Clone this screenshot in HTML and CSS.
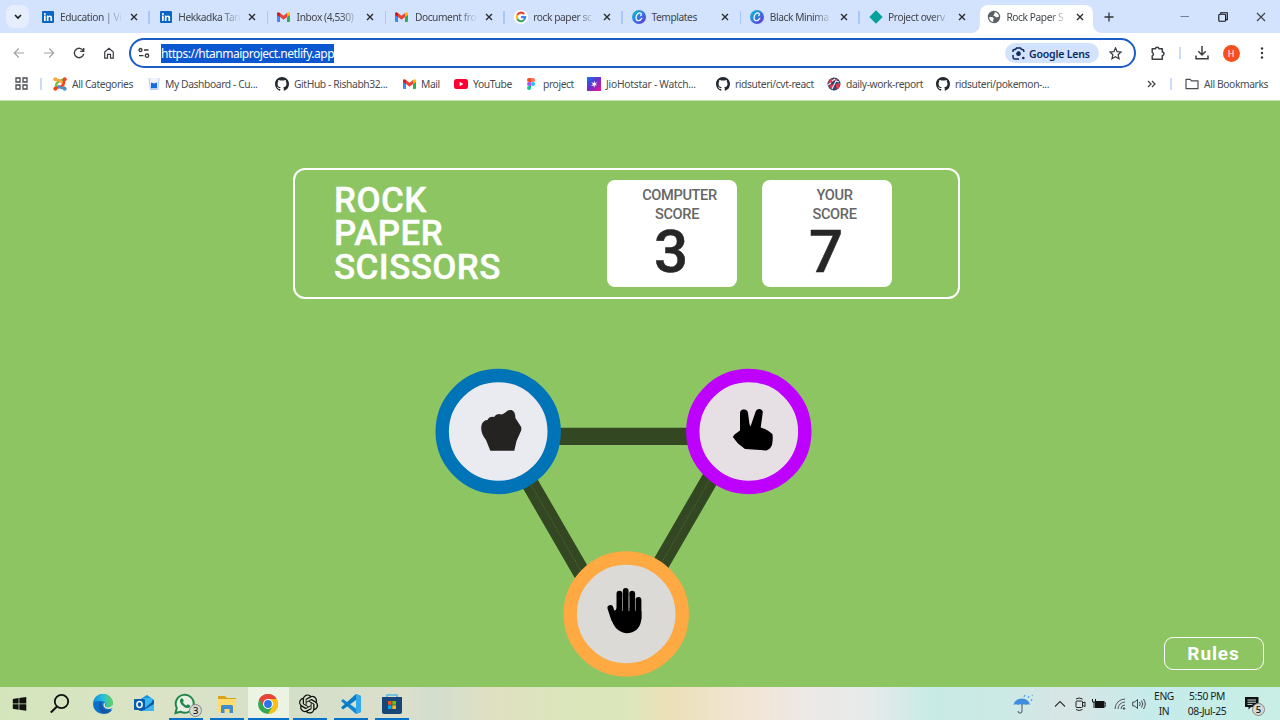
FILE: index.html
```html
<!DOCTYPE html>
<html lang="en">
<head>
<meta charset="utf-8">
<title>Rock Paper Scissors</title>
<link rel="stylesheet" href="styles.css">
</head>
<body>
<svg class="defs" width="0" height="0">
  <defs>
    <symbol id="linkedin" viewBox="0 0 12 12"><rect width="12" height="12" rx="1" fill="#0a66c2"/><path d="M2 4.6h1.7V10H2zM4.8 4.6h1.6v.8c.9-1.4 3.7-1.3 3.7 1.3V10H8.4V7c0-1.4-1.9-1.3-1.9 0v3H4.8z" fill="#fff"/><circle cx="2.9" cy="2.9" r="1" fill="#fff"/></symbol>
    <symbol id="gmail" viewBox="0 0 13 10"><path d="M0 1.5V9q0 1 1 1h2V4z" fill="#4285f4"/><path d="M13 1.5V9q0 1-1 1h-2V4z" fill="#34a853"/><path d="M10 1v4l3-2V1.6C13 .1 11.500-.5 10 1z" fill="#fbbc04"/><path d="M3 1v4L0 3V1.600C0 .1 1.500-.5 3 1z" fill="#c5221f"/><path d="M3 1l3.500 2.700L10 1v4L6.500 7.700 3 5z" fill="#ea4335"/></symbol>
    <symbol id="google" viewBox="0 0 14 14"><circle cx="7" cy="7" r="7" fill="#fff"/><g fill="none" stroke-width="2.100"><path d="M10.200 4A4.200 4.200 0 0 0 3.300 5" stroke="#ea4335"/><path d="M3.300 5a4.200 4.200 0 0 0 0 4" stroke="#fbbc04"/><path d="M3.300 9a4.200 4.200 0 0 0 6.400 1.300" stroke="#34a853"/><path d="M9.700 10.300A4.200 4.200 0 0 0 11.200 7.100H7" stroke="#4285f4"/></g></symbol>
    <linearGradient id="canvaFill" x1="0" y1="0" x2="1" y2="1"><stop offset="0" stop-color="#08c5d0"/><stop offset=".5" stop-color="#3479df"/><stop offset="1" stop-color="#7928dd"/></linearGradient>
    <symbol id="canva" viewBox="0 0 14 14"><circle cx="7" cy="7" r="7" fill="url(#canvaFill)"/><path d="M8.700 5.600c2-2.200-.8-3.500-2.900-1.900C3.400 5.700 3.400 10.300 6 10.700c1.600.2 3-.9 3.800-2.400" fill="none" stroke="#fff" stroke-width="1.200" stroke-linecap="round"/></symbol>
    <symbol id="github" viewBox="0 0 16 16"><path fill="#24292f" d="M8 0C3.580 0 0 3.580 0 8c0 3.540 2.290 6.530 5.470 7.590.4.070.55-.17.55-.38 0-.19-.01-.82-.01-1.490-2.010.37-2.530-.49-2.690-.94-.09-.23-.48-.94-.82-1.130-.28-.15-.68-.52-.01-.53.63-.01 1.080.58 1.230.82.72 1.210 1.870.87 2.330.66.070-.52.280-.87.510-1.070-1.780-.2-3.640-.89-3.640-3.950 0-.87.310-1.590.82-2.150-.08-.2-.36-1.020.08-2.120 0 0 .67-.21 2.200.82.640-.18 1.320-.27 2-.27s1.360.09 2 .27c1.530-1.040 2.200-.82 2.200-.82.440 1.100.160 1.920.080 2.120.510.560.820 1.270.820 2.150 0 3.070-1.870 3.750-3.650 3.950.290.250.540.730.540 1.480 0 1.070-.01 1.930-.01 2.200 0 .21.150.46.550.38A8.010 8.010 0 0 0 16 8c0-4.420-3.580-8-8-8z"/></symbol>
    <symbol id="close" viewBox="0 0 8 8"><path d="M1 1l6 6M7 1L1 7" stroke="#292c30" stroke-width="1.400"/></symbol>
  </defs>
</svg>

<header class="browser">
  <div class="tabstrip">
    <div class="tab-search"><svg width="10" height="7" viewBox="0 0 10 7"><path d="M2 2l3 3 3-3" fill="none" stroke="#1c1e22" stroke-width="1.700"/></svg></div>
    <div class="tab"><svg class="fav small"><use href="#linkedin"/></svg><span class="tab-title fade">Education | Vi</span><svg class="x"><use href="#close"/></svg></div>
    <div class="tab"><svg class="fav small"><use href="#linkedin"/></svg><span class="tab-title fade">Hekkadka Tan</span><svg class="x"><use href="#close"/></svg></div>
    <div class="tab"><svg class="fav mail"><use href="#gmail"/></svg><span class="tab-title fade">Inbox (4,530)</span><svg class="x"><use href="#close"/></svg></div>
    <div class="tab"><svg class="fav mail"><use href="#gmail"/></svg><span class="tab-title fade">Document fro</span><svg class="x"><use href="#close"/></svg></div>
    <div class="tab"><svg class="fav"><use href="#google"/></svg><span class="tab-title fade">rock paper sc</span><svg class="x"><use href="#close"/></svg></div>
    <div class="tab"><svg class="fav"><use href="#canva"/></svg><span class="tab-title">Templates</span><svg class="x"><use href="#close"/></svg></div>
    <div class="tab"><svg class="fav"><use href="#canva"/></svg><span class="tab-title fade">Black Minima</span><svg class="x"><use href="#close"/></svg></div>
    <div class="tab last"><svg class="fav" viewBox="0 0 14 14"><path d="M7 .3L13.700 7 7 13.700.3 7z" fill="#05a19b"/></svg><span class="tab-title fade">Project overv</span><svg class="x"><use href="#close"/></svg></div>
    <div class="tab active"><svg class="fav" viewBox="0 0 14 14"><circle cx="7" cy="7" r="6.200" fill="#5b6065"/><path d="M7.500 2.200c2.500 0 4.300 2 4.500 4.200L9.700 7.600 7.800 6.300 6.200 5.600l1.300-1.700zM2.100 7l3.300.1 1.600 1.600-.8 1.300v2C3.700 11.700 2.200 9.600 2.100 7z" fill="#fff"/></svg><span class="tab-title fade">Rock Paper S</span><svg class="x"><use href="#close"/></svg></div>
    <svg class="newtab" viewBox="0 0 10 10"><path d="M5 .5v9M.5 5h9" stroke="#30343a" stroke-width="1.300"/></svg>
    <div class="winctl">
      <svg width="10" height="10"><path d="M.5 4.500h8.500" stroke="#777f8d"/></svg>
      <svg width="10" height="10" fill="none" stroke="#111" stroke-width="1.100"><rect x=".8" y="2.200" width="6.800" height="7" rx="1"/><path d="M2.800 2V.8h6.500v6.800H8"/></svg>
      <svg width="10" height="10"><path d="M1 1l8 8M9 1L1 9" stroke="#3c4048" stroke-width="1.100"/></svg>
    </div>
  </div>

  <div class="toolbar">
    <div class="nav">
      <svg viewBox="0 0 12 12" stroke="#a2a4a7"><path d="M11 6H1.500M5.800 1.500L1.300 6l4.500 4.500"/></svg>
      <svg viewBox="0 0 12 12" stroke="#a2a4a7"><path d="M1 6h9.500M6.200 1.500L10.700 6l-4.500 4.500"/></svg>
      <svg viewBox="0 0 12 12" stroke="#3b3e42"><path d="M10.300 4A4.700 4.700 0 1 0 10.700 6.800M10.700.9v3.500H7.200" stroke-width="1.400"/></svg>
      <svg viewBox="0 0 12 12" stroke="#3b3e42"><path d="M1.700 5L6 1.300 10.300 5v6.200H7.500V7.300h-3v3.900H1.700z" stroke-width="1.200"/></svg>
    </div>
    <div class="omnibox">
      <svg class="tune" viewBox="0 0 12 12" fill="none" stroke="#33363b" stroke-width="1.300"><circle cx="2.500" cy="3" r="1.500"/><path d="M6 3h4.500M1 8.700h4.500"/><circle cx="9" cy="8.700" r="1.700"/></svg>
      <span class="url">https://htanmaiproject.netlify.app</span>
      <span class="lens"><svg width="13" height="13" viewBox="0 0 13 13" fill="none" stroke="#0a2a63" stroke-width="1.500"><path d="M1 5V3.600Q1 2.400 2.200 2.400H3.500L4.500 1h4l1 1.400h1q1.300 0 1.300 1.300V5M1 8v2.300Q1 12 2.700 12H7"/><circle cx="6.500" cy="6.700" r="1.600" fill="#0a2a63"/><circle cx="11.300" cy="11" r=".6"/></svg><b>Google Lens</b></span>
      <svg class="star" viewBox="0 0 12 12"><path d="M6 .9l1.500 3.400 3.700.3-2.800 2.500.8 3.700L6 8.900l-3.200 1.900.8-3.700L.8 4.600l3.700-.3z" fill="none" stroke="#3b3e42" stroke-width="1.200"/></svg>
    </div>
    <div class="actions">
      <svg width="16" height="15" viewBox="0 0 16 15"><path d="M2.200 2.700h3.300a1.700 1.500 0 0 1 3.400 0h3.400v3.300a1.700 1.700 0 0 1 0 3.400v3.800H2.200V10a2 2 0 0 0 0-3.600z" fill="none" stroke="#3b3e42" stroke-width="1.500" stroke-linejoin="round"/></svg>
      <i class="rule"></i>
      <svg width="14" height="14" viewBox="0 0 14 14"><path d="M7 0v8.500M3.300 5.300L7 9l3.700-3.700M1 9.500v3.300h12V9.500" fill="none" stroke="#3b3e42" stroke-width="1.500"/></svg>
      <span class="avatar">H</span>
      <svg width="4" height="14" viewBox="0 0 4 14" fill="#33363b"><circle cx="2" cy="2.500" r="1.200"/><circle cx="2" cy="7" r="1.200"/><circle cx="2" cy="11.500" r="1.200"/></svg>
    </div>
  </div>

  <div class="bookmarks">
    <svg class="apps" viewBox="0 0 13 13" fill="none" stroke="#4a4d52" stroke-width="1.300"><path d="M1 1h4v4H1zM8 1h4v4H8zM1 8h4v4H1zM8 8h4v4H8z"/></svg>
    <i class="rule"></i>
    <div class="bm"><svg viewBox="0 0 14 14" fill="none" stroke-width="2.500"><path d="M3 11V8.500Q3 6.500 5 5L9.500 2.800H11" stroke="#7ac143"/><path d="M3 3H5.500Q8 3.500 9.500 6L11 11" stroke="#f9a541"/><path d="M11 3V6Q10.500 8 8 9.500L3 11" stroke="#f44321"/><path d="M11 11H8.500Q6 10.500 4.800 8.500" stroke="#5091cd"/><g stroke="none"><circle cx="2.300" cy="2.300" r="2" fill="#f9a541"/><circle cx="11.700" cy="2.300" r="2" fill="#f44321"/><circle cx="2.300" cy="11.700" r="2" fill="#f44321"/><circle cx="11.700" cy="11.700" r="2" fill="#5091cd"/></g></svg><span>All Categories</span></div>
    <div class="bm dash"><svg viewBox="0 0 14 14"><path d="M2 1l1.500 11.500h7.500L12 1" fill="#eef2fc" stroke="#b7c9ed"/><path d="M4 5.500l3 .9 3-.9v5.800H4z" fill="#1668e8"/></svg><span>My Dashboard - Cu...</span></div>
    <div class="bm"><svg><use href="#github"/></svg><span>GitHub - Rishabh32...</span></div>
    <div class="bm"><svg class="mail"><use href="#gmail"/></svg><span>Mail</span></div>
    <div class="bm"><svg viewBox="0 0 14 14"><rect y="2" width="14" height="10" rx="2.500" fill="#f03"/><path d="M5.600 4.800L9.400 7 5.600 9.200z" fill="#fff"/></svg><span>YouTube</span></div>
    <div class="bm"><svg viewBox="0 0 14 14"><path d="M7 1H5a2 2 0 0 0 0 4h2z" fill="#f24e1e"/><path d="M7 1h2a2 2 0 0 1 0 4H7z" fill="#ff7262"/><path d="M7 5H5a2 2 0 0 0 0 4h2z" fill="#a259ff"/><circle cx="9" cy="7" r="2" fill="#1abcfe"/><path d="M7 9H5a2 2 0 1 0 2 2z" fill="#0acf83"/></svg><span>project</span></div>
    <div class="bm wide"><svg viewBox="0 0 14 14"><defs><linearGradient id="jio" x1="0" y1="0" x2="1" y2="1"><stop stop-color="#087cf0"/><stop offset=".45" stop-color="#6330d0"/><stop offset="1" stop-color="#f0148c"/></linearGradient></defs><rect width="14" height="14" fill="url(#jio)"/><path d="M7.500 3.500l.4 2.500 2.600-.7-2 1.700 1.700 1.300-2.400-.1-.6 2.500-.7-2.300-2.600.5 2.100-1.600-1.700-2 2.400.8z" fill="#fff"/></svg><span>JioHotstar - Watch...</span></div>
    <div class="bm"><svg><use href="#github"/></svg><span>ridsuteri/cvt-react</span></div>
    <div class="bm"><svg viewBox="0 0 14 14"><circle cx="7" cy="7" r="6.500" fill="#28466b"/><path d="M1 5l4-4 1 3-3 4zM7 2l4 0-3 3zM2 9l4-2 1 3-3 2zM9 7l4-1-1 5-3 1z" fill="#e53952"/><path d="M5 4l3-2M7 8l2-4 3 1M5 12l2-4M1 8l3-2" stroke="#eef2f8" stroke-width="1.100" fill="none"/></svg><span>daily-work-report</span></div>
    <div class="bm"><svg><use href="#github"/></svg><span>ridsuteri/pokemon-...</span></div>
    <svg class="more" viewBox="0 0 9 8"><path d="M1 1l3 3-3 3M5 1l3 3-3 3" fill="none" stroke="#3b3e42" stroke-width="1.200"/></svg>
    <i class="rule"></i>
    <div class="bm all"><svg viewBox="0 0 14 14"><path d="M1 2.300h4.200l1.400 1.500H13v7.900H1z" fill="none" stroke="#4a4d52" stroke-width="1.200" stroke-linejoin="round"/></svg><span>All Bookmarks</span></div>
  </div>
</header>

<main class="game">
  <section class="scoreboard">
    <h1>ROCK<br>PAPER<br>SCISSORS</h1>
    <div class="score computer"><h2><span>COMPUTER</span><span>SCORE</span></h2><p>3</p></div>
    <div class="score"><h2><span>YOUR</span><span>SCORE</span></h2><p>7</p></div>
  </section>
  <svg class="board" width="380" height="312" viewBox="434 367 380 312">
    <g stroke="#334722" stroke-width="17.200"><path d="M500 436.300H750M515 457.500L596 597.500M723 456.500L646 589.500"/></g>
    <path d="M531 485l50 86M709.300 480.600L661.500 563" stroke="#5d7d42" stroke-width=".5" stroke-dasharray="2 1"/>
    <circle cx="498.200" cy="431.500" r="56" fill="#e9ebf1" stroke="#0074b6" stroke-width="13.400"/>
    <circle cx="748.800" cy="431.500" r="56" fill="#e6e0e4" stroke="#bd00ff" stroke-width="13.400"/>
    <circle cx="626.200" cy="614" r="56" fill="#dbdad7" stroke="#ffa943" stroke-width="13.400"/>
    <path fill="#252322" d="M490.300 450.700L486 440Q480.500 433 481.300 426.500Q482 420.500 487.500 420Q489.500 416 494 417Q497 412.500 501.500 414.500Q504 413.500 506 412Q508 409.500 511.500 410Q515.300 411 515.400 418L521.200 427Q521.800 430 520.500 432L516.500 441L514.300 450.700z"/>
    <path fill="#000" d="M740 430.500V413.500Q740 409.800 743.300 409.500Q747.500 409 748 413L749.500 424L750.500 426.500L755.500 412Q756.500 408.700 760 409Q763.500 410 762.700 413L760.700 427.500L765 429L768.500 431L772.400 434Q773.300 438 772 445Q770.500 449 766.500 450.500L745 449L738 443.500L732.800 437L734.500 434.500z"/>
    <g stroke="#000" stroke-width="5.800" stroke-linecap="round"><path d="M619.400 593.600V614M625.700 591V614M632.200 593.600V614M638.500 600V618M610.400 608L614 619"/></g>
    <path d="M611.500 611q5 .5 5.500-4V611h24.400v8Q640 632.800 626 633.200Q613 631 611 616z"/>
    <path d="M622.500 596v12M629 596v12M635.400 600v9" stroke="#8b8b89" stroke-width=".7"/>
  </svg>
  <button class="rules">Rules</button>
</main>

<footer class="taskbar">
  <div class="apps-row">
    <div class="app"><svg viewBox="0 0 24 24"><path d="M4.800 6.900l5.800-.9v5.500H4.800zM11.300 5.900l7-1v6.600h-7zM4.800 12.200h5.800v5.500l-5.800-.9zM11.300 12.200h7v6.600l-7-1z" fill="#111"/></svg></div>
    <div class="app"><svg viewBox="0 0 24 24"><circle cx="12.500" cy="9.500" r="6.700" fill="none" stroke="#111" stroke-width="1.800"/><path d="M8 14.500L1.800 20.500" stroke="#111" stroke-width="2"/></svg></div>
    <div class="app"><svg viewBox="0 0 24 24"><defs><linearGradient id="edgeTop" x1="0" x2="1"><stop stop-color="#0a92d8"/><stop offset=".5" stop-color="#29bedc"/><stop offset="1" stop-color="#63d550"/></linearGradient></defs><circle cx="12" cy="12" r="10" fill="#0b70c9"/><path d="M2.200 11C3 5 7 2 12 2c6 0 10 4.500 10 9.500 0 4-5 5.500-8 3.500 2-3-.5-6-4-6-4 0-6 0-7.800 2z" fill="url(#edgeTop)"/><path d="M10 9.500c-4.500 4-1.500 11.500 4 12.300 3 0 6-1.800 7.300-4.300-4 2.500-11.800.5-11.300-8z" fill="#1756a5"/><path d="M13 10.800c-1.700 3 .5 6.500 5 6.200 2 0 3-.8 4.500-2l-.5 3.500 2-5-2-1c-2 3.500-7.300 3.600-8 1.600-.3-.8.400-1.600 0-2.600z" fill="#d9e6c8"/></svg></div>
    <div class="app"><svg viewBox="0 0 24 24"><path d="M7 8l8-5 7 5v11H7z" fill="#1492df"/><path d="M11 6h9v7l-7 4z" fill="#38b9ef"/><path d="M22 8v11H8l5-3z" fill="#075da9"/><path d="M22 12v7H10z" fill="#41b4ed"/><rect x="2" y="7" width="11" height="11" rx="1" fill="#075cac"/><ellipse cx="7.500" cy="12.500" rx="2.600" ry="3" fill="none" stroke="#fff" stroke-width="1.500"/></svg></div>
    <div class="app open"><svg viewBox="0 0 24 24"><path d="M2.500 21l1.300-5A9 9 0 1 1 7.500 19.700z" fill="#e8f1e3" stroke="#23864e" stroke-width="2"/><path d="M8.200 6.500q1.300-.8 2 .9l.6 1.600-1 1.300q1.200 2.300 3.500 3.300l1.400-1.300 2.500 1.200q.1 2-2 2.500c-3 .7-8.500-4-8.200-7.300 0-1 .5-1.700 1.200-2.200z" fill="#23864e"/></svg><span class="badge">3</span></div>
    <div class="app open"><svg viewBox="0 0 24 24"><path d="M3 4h7l2 2h9v13H3z" fill="#dba117"/><path d="M3 7h18v13H3z" fill="#ffdc70"/><path d="M6 21v-6.500Q6 13 7.500 13h9q1.500 0 1.500 1.500V21h-3.500v-4h-5v4z" fill="#3f8dcc"/></svg></div>
    <div class="app open active"><svg viewBox="0 0 24 24"><circle cx="12" cy="12" r="10" fill="#34a853"/><path d="M12 12L3.340 7A10 10 0 0 1 20.660 7z" fill="#ea4335"/><path d="M12 7h8.660A10 10 0 0 1 12 22l4.500-7.500z" fill="#fbc116"/><path d="M3.340 7L7.670 14.500 12 12 12 7z" fill="#ea4335"/><circle cx="12" cy="12" r="5" fill="#fff"/><circle cx="12" cy="12" r="3.900" fill="#2b73e8"/></svg></div>
    <div class="app open"><svg viewBox="0 0 24 24"><path fill="#111" d="M22.280 9.820a5.980 5.980 0 0 0-.52-4.910 6.050 6.050 0 0 0-6.510-2.900A6.070 6.070 0 0 0 4.980 4.180a5.980 5.980 0 0 0-4 2.900 6.050 6.050 0 0 0 .74 7.100 5.980 5.980 0 0 0 .51 4.910 6.050 6.050 0 0 0 6.510 2.900A5.980 5.980 0 0 0 13.260 24a6.060 6.060 0 0 0 5.770-4.210 5.990 5.990 0 0 0 4-2.900 6.060 6.060 0 0 0-.75-7.070zm-9.020 12.610a4.480 4.480 0 0 1-2.880-1.040l.14-.08 4.780-2.760a.8.8 0 0 0 .39-.68v-6.740l2.020 1.170.04.050v5.580a4.500 4.500 0 0 1-4.490 4.500zM3.600 18.300a4.470 4.470 0 0 1-.53-3.010l.14.090 4.780 2.760a.77.77 0 0 0 .78 0l5.840-3.370v2.330l-.03.060-4.840 2.790A4.500 4.500 0 0 1 3.600 18.300zM2.340 7.900a4.480 4.480 0 0 1 2.370-1.980v5.680a.77.77 0 0 0 .39.680l5.810 3.350-2.020 1.170-.07 0-4.830-2.790A4.500 4.500 0 0 1 2.340 7.870zm16.600 3.850l-5.840-3.390 2.020-1.160.07 0 4.830 2.790a4.490 4.490 0 0 1-.68 8.100v-5.670a.79.79 0 0 0-.4-.67zm2.010-3.020l-.14-.090-4.770-2.780a.78.78 0 0 0-.79 0L9.410 9.230V6.900l.03-.06 4.830-2.790a4.500 4.500 0 0 1 6.680 4.660zM8.310 12.860l-2.020-1.160-.04-.060V6.070a4.500 4.500 0 0 1 7.380-3.450l-.14.080-4.780 2.760a.8.8 0 0 0-.39.680zm1.100-2.370l2.600-1.500 2.610 1.500v3l-2.600 1.500-2.610-1.500z" transform="translate(2 2.400) scale(.8)"/></svg></div>
    <div class="app open"><svg viewBox="0 0 24 24"><path d="M17 2l5 2v16l-5 2L2 9l2-2 13 9.500z" fill="#1187d4"/><path d="M17 2v6L4 17.500l-2-2z" fill="#087bc5"/><path d="M17 2l5 2v16l-5 2z" fill="#32a9ef"/></svg></div>
    <div class="app open"><svg viewBox="0 0 24 24"><path d="M7 6V3h10v3" fill="none" stroke="#55b9ea" stroke-width="1.600"/><path d="M2 5h20v15q0 2-2 2H4q-2 0-2-2z" fill="#174677"/><path d="M8 9h3.700v3.700H8z" fill="#f25022"/><path d="M12.300 9H16v3.700h-3.700z" fill="#7fba00"/><path d="M8 13.300h3.700V17H8z" fill="#00a4ef"/><path d="M12.300 13.300H16V17h-3.700z" fill="#ffb900"/></svg></div>
  </div>
  <div class="tray">
    <svg class="weather" viewBox="0 0 20 20"><path d="M.5 11Q2 4.500 9 4.500q7 .5 8 6.500-2-1.500-4 0-2-1.500-4 0-2-1.500-4 0-2-1.500-4.500 0z" fill="#3e8ddd"/><path d="M9 10v7q-.5 2.500-2.500 2-1.500-.5-1.300-2" fill="none" stroke="#667986" stroke-width="1.300"/><path d="M11 3l1-2M15 4l1-2M18 7l1-2M19 2l.6-1" stroke="#5aa7ea" stroke-width="1.300"/></svg>
    <svg class="chev" viewBox="0 0 12 8"><path d="M1 6.500l5-5 5 5" fill="none" stroke="#333" stroke-width="1.100"/></svg>
    <svg class="meet" viewBox="0 0 12 14" fill="none" stroke="#222"><rect x="2" y="4" width="6.500" height="6.500" rx="1"/><path d="M8.500 6l2.500-1v4.500L8.500 8.500M2 2q3-2 6.500 0M2 12.500q3 2 6.500 0"/></svg>
    <svg class="batt" viewBox="0 0 14 10"><path d="M3 2h9.500v7H3z" fill="#111"/><path d="M12.500 4H14v3h-1.500M.5 0v3h3V0M2 3v6" fill="none" stroke="#111"/></svg>
    <svg class="wifi" viewBox="0 0 12 12" fill="none" stroke="#555"><path d="M1 11A10 10 0 0 1 11 1M4 11a7 7 0 0 1 7-7M7 11a4 4 0 0 1 4-4"/><circle cx="10" cy="10.500" r=".8" fill="#222"/></svg>
    <svg class="vol" viewBox="0 0 14 12" fill="none" stroke="#444"><path d="M.7 4h2L5.500 1.500v9L2.700 8h-2zM7.500 4q1.500 2 0 4M9.500 2.500q2.500 3.500 0 7M11.500 1q3.500 5 0 10"/></svg>
    <div class="stack lang"><span>ENG</span><span>IN</span></div>
    <div class="stack clock"><span>5:50 PM</span><span>08-Jul-25</span></div>
    <div class="note"><svg width="14" height="14" viewBox="0 0 14 14"><path d="M0 0h13.500v10H6L3.500 12.500V10H0z" fill="#111"/><path d="M2.500 3h8.500M2.500 5.200h8.500M2.500 7.400h5" stroke="#c9dedc"/></svg><span class="badge">5</span></div>
  </div>
</footer>
</body>
</html>
```

FILE: styles.css
```css
* { box-sizing: border-box; }
body { margin: 0; width: 1280px; height: 720px; overflow: hidden; display: flex; flex-direction: column; font-family: "Noto Sans", "Open Sans", sans-serif; }
svg { display: block; flex: none; }
.defs { position: absolute; }

/* Browser chrome */
.browser { height: 101px; flex: none; background: #fff; border-bottom: 1px solid #c5e0b2; }
.tabstrip { height: 33px; background: #d3e2fd; display: flex; align-items: center; padding-left: 6px; }
.tab-search { width: 23px; height: 23px; border-radius: 8px; background: #e6eefe; display: grid; place-items: center; margin-right: 2.500px; }
.tab { width: 118.300px; height: 28px; padding: 0 12px 0 9px; display: flex; align-items: center; position: relative; flex: none; }
.tab:not(.last):not(.active)::after { content: ""; position: absolute; right: 0; top: 8px; width: 1.500px; height: 13px; background: #a8c7fa; }
.fav { width: 14px; height: 14px; margin-right: 5.500px; }
.fav.small { width: 12px; height: 12px; margin: 0 6.500px 0 1px; }
.fav.mail { width: 13px; height: 10px; margin: 0 6.500px 0 0; }
.tab-title { width: 62px; font-size: 10.200px; letter-spacing: -.42px; white-space: nowrap; color: #41454b; margin-right: auto; }
.tab-title.fade { -webkit-mask-image: linear-gradient(90deg, #000 70%, rgba(0, 0, 0, .1) 97%); mask-image: linear-gradient(90deg, #000 70%, rgba(0, 0, 0, .1) 97%); }
.x { width: 8px; height: 8px; }
.tab.active { width: 113px; height: 28px; margin-top: 5px; background: #fff; border-radius: 8px 8px 0 0; padding: 0 9px 5px 7px; margin-left: 2px; }
.tab.active::before, .tab.active::after { content: ""; position: absolute; bottom: 0; width: 8px; height: 8px; }
.tab.active::before { left: -8px; background: radial-gradient(circle at 0 0, transparent 7.500px, #fff 8px); }
.tab.active::after { right: -8px; background: radial-gradient(circle at 100% 0, transparent 7.500px, #fff 8px); }
.newtab { width: 10px; height: 10px; margin-left: 11.500px; }
.winctl { margin-left: auto; display: flex; gap: 28px; padding-right: 14px; }

.toolbar { height: 40px; display: flex; align-items: center; }
.nav { width: 129px; display: flex; gap: 18px; padding-left: 13px; }
.nav svg { width: 12px; height: 12px; fill: none; stroke-width: 1.200; }
.omnibox { width: 1007px; height: 30px; border: 2px solid #1b5cc5; border-radius: 15px; display: flex; align-items: center; padding: 0 12px 0 7px; }
.tune { width: 12px; height: 12px; }
.url { margin-left: 11px; height: 19px; line-height: 19px; font-size: 12px; letter-spacing: -.5px; color: #fff; background: #0b57d0; white-space: nowrap; }
.lens { margin-left: auto; width: 94px; height: 20px; border-radius: 10px; background: #d3e2fd; color: #0a2a63; display: flex; align-items: center; gap: 4px; padding-left: 7px; font-size: 10.500px; white-space: nowrap; letter-spacing: -.17px; }
.lens b { font-weight: 600; padding-top: 1px; }
.star { width: 13px; height: 13px; margin-left: 10px; }
.actions { display: flex; align-items: center; padding-left: 14px; }
.rule { width: 1.500px; height: 12px; background: #cbdcf8; display: block; }
.actions .rule { margin: 0 14px 0 13px; }
.avatar { width: 17px; height: 17px; margin: 0 20px 0 14px; border-radius: 50%; background: #f4511e; color: #fff; font-size: 9px; display: grid; place-items: center; }

.bookmarks { height: 21px; display: grid; align-items: center; grid-template-columns: 25px 13px 94px 128px 128px 51px 70px 63px 129px 111px 109px 211px 23px 15px 90px; padding-left: 15px; }
.apps { width: 13px; height: 13px; }
.bm { display: flex; align-items: center; gap: 5px; font-size: 10.300px; letter-spacing: -.4px; color: #484c52; white-space: nowrap; }
.bm svg { width: 14px; height: 14px; }
.bm.dash { gap: 4px; }
.bm.wide { letter-spacing: -.25px; }
.bm .mail { width: 13px; height: 10px; }
.more { width: 9px; height: 8px; }

/* Game */
.game { height: 586px; flex: none; background: #8cc562; position: relative; }
.scoreboard { height: 131px; width: 667px; margin: 67px 0 0 293px; border: 2px solid #fff; border-radius: 12px; display: flex; padding: 10px 0 0 39px; font-family: Roboto, sans-serif; }
.game { display: flow-root; }
.scoreboard h1 { margin: 4px 0 0; width: 273px; font-size: 35px; line-height: 33.300px; font-weight: 500; letter-spacing: .4px; color: #fff; -webkit-text-stroke: .4px #fff; }
.score { width: 130px; height: 107px; border-radius: 8px; background: #fff; margin-right: 25px; text-align: center; }
.score h2 { margin: 6px 0 0; padding-left: 15px; font-size: 14.600px; line-height: 18.600px; font-weight: 500; color: #666; letter-spacing: -.35px; }
.score h2 span { display: block; }
.score.computer h2 span + span { padding-right: 5px; }
.score p { margin: 0; padding-right: 2px; font-size: 60px; line-height: 57px; font-weight: 500; color: #262626; -webkit-text-stroke: .5px #262626; }
.board { margin: 68px 0 0 434px; }
.rules { position: absolute; right: 16px; bottom: 17px; width: 100px; height: 33px; border: 1.500px solid #fff; border-radius: 9px; background: transparent; color: #fff; font: 700 19px/1 Roboto, sans-serif; letter-spacing: .9px; padding: 0 1px 0 0; }

/* Taskbar */
.taskbar { height: 33px; flex: none; display: flex; justify-content: space-between; background: linear-gradient(90deg, #d4e5bb 0, #dbe3c7 170px, #d4dfc9 300px, #dcdfcc 405px, #d3decf 430px, #dfe0c2 490px, #dbe6ba 580px, #dce6bc 630px, #ebe0b8 665px, #f2e5d5 750px, #ece9e7 810px, #e7eaeb 870px, #c8ebe5 930px, #cce9e6 1010px, #d8e5e5 1070px, #c5ebeb 1150px, #c8eee5 1280px); }
.apps-row { display: flex; }
.app { width: 41.300px; height: 33px; display: grid; place-items: center; position: relative; }
.app svg { width: 24px; height: 24px; margin-right: 1px; }
.app.open::after { content: ""; position: absolute; left: 3.500px; right: 3.500px; bottom: 0; height: 2px; background: #0872c9; }
.app.active { background: #edf3e3; }
.app.active::after { left: 0; right: 0; }
.badge { position: absolute; width: 13px; height: 13px; border: 1px solid #888; border-radius: 50%; background: #d4d9d1; color: #111; font-size: 9.500px; font-weight: 500; line-height: 11px; text-align: center; }
.app .badge { left: 24px; top: 17px; }
.tray { display: flex; align-items: center; width: 268px; font-size: 10.300px; color: #191e20; }
.weather { width: 20px; height: 20px; margin-left: 1px; }
.chev { width: 12px; height: 8px; margin-left: 21px; }
.meet { width: 12px; height: 14px; margin-left: 8px; }
.batt { width: 14px; height: 10px; margin-left: 6px; }
.wifi { width: 12px; height: 12px; margin-left: 8px; }
.vol { width: 14px; height: 12px; margin-left: 6px; }
.stack { display: flex; flex-direction: column; align-items: center; line-height: 15px; letter-spacing: -.4px; white-space: nowrap; }
.lang { width: 22px; margin-left: 7px; }
.clock { width: 44px; margin-left: 10px; }
.note { position: relative; margin-left: 16px; }
.note .badge { left: 7px; top: 6px; }
```
